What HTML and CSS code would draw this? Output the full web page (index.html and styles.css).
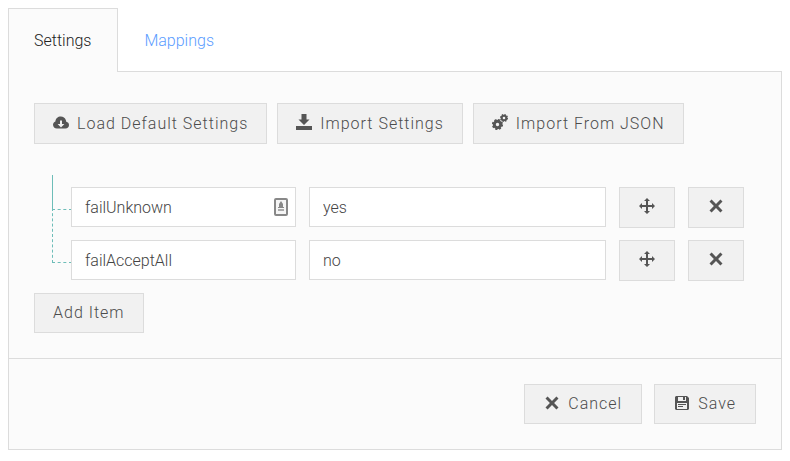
FILE: index.html
```html
<!DOCTYPE html>
<html lang="en">
<head>
    <meta charset="UTF-8">
    <meta name="viewport" content="width=device-width, initial-scale=1.0">
    <title>Settings</title>
    <link rel="stylesheet" href="styles.css">
</head>
<body>

    <!-- Icons shared by the buttons -->
    <svg class="sprite" aria-hidden="true">
        <symbol id="icon-cloud" viewBox="0 0 16 16">
            <path fill-rule="evenodd" d="M4 14.500a4 4 0 0 1-4-3.700c0-1.600 1-2.900 2.400-3.400C2.500 4.600 4.900 2.500 7.800 2.500c2.400 0 4.300 1.300 5 3.400.5 1 .3 1.400.5 1.800 1.600.4 2.700 1.500 2.700 3.200 0 2-1.500 3.600-3.500 3.600zM7 6.500v3.500H4.600L8 13.500l3.400-3.500H9V6.500z"/>
        </symbol>
        <symbol id="icon-download" viewBox="0 0 16 16">
            <path d="M5.500 0h5v5.500h3L8 11 2.500 5.500h3zM0 12h16v4H0z"/>
        </symbol>
        <symbol id="icon-cogs" viewBox="0 0 16 16">
            <circle cx="5.500" cy="10.500" r="3.200" fill="none" stroke="currentColor" stroke-width="3"/>
            <circle cx="5.500" cy="10.500" r="4.800" fill="none" stroke="currentColor" stroke-width="1.600" stroke-dasharray="2.100 1.670"/>
            <circle cx="12" cy="4" r="2.300" fill="none" stroke="currentColor" stroke-width="2"/>
            <circle cx="12" cy="4" r="3.300" fill="none" stroke="currentColor" stroke-width="1.400" stroke-dasharray="1.400 1.190"/>
        </symbol>
        <symbol id="icon-move" viewBox="0 0 16 16">
            <path d="M8 0l3 3H9v4h4V5l3 3-3 3V9H9v4h2l-3 3-3-3h2V9H3v2L0 8l3-3v2h4V3H5z"/>
        </symbol>
        <symbol id="icon-close" viewBox="0 0 16 16">
            <path d="M3.600 1.500L8 5.900l4.400-4.400 2.100 2.100L10.100 8l4.400 4.400-2.100 2.100L8 10.100l-4.400 4.400-2.100-2.100L5.900 8 1.500 3.600z"/>
        </symbol>
        <symbol id="icon-save" viewBox="0 0 16 16">
            <path fill-rule="evenodd" d="M2 1h11l2 2v11l-1 1H2l-1-1V2zM4 2v4h8V2zM3 8v6h10V8z"/>
            <path d="M9 2h2v3H9zM4 9h8v1H4zM4 11h5v1H4z"/>
        </symbol>
    </svg>

    <nav class="tabs">
        <a class="tab active" href="#settings">Settings</a>
        <a class="tab" href="#mappings">Mappings</a>
    </nav>

    <form class="panel" id="settings">
        <div class="panel-body">
            <div class="toolbar">
                <button class="btn" type="button"><svg class="icon"><use href="#icon-cloud"/></svg>Load Default Settings</button>
                <button class="btn" type="button"><svg class="icon"><use href="#icon-download"/></svg>Import Settings</button>
                <button class="btn" type="button"><svg class="icon"><use href="#icon-cogs"/></svg>Import From JSON</button>
            </div>

            <ul class="tree">
                <li class="tree-item">
                    <div class="key">
                        <input class="field" type="text" value="failUnknown" aria-label="Key">
                        <svg class="autofill" viewBox="0 0 16 20" aria-hidden="true">
                            <rect class="autofill-frame" x="2" y="2" width="12" height="16" rx="1"/>
                            <path d="M8 4l2 3v3h1v1H5v-1h1V7z"/>
                            <path class="autofill-base" d="M5 12h6v2H5z"/>
                        </svg>
                    </div>
                    <input class="field" type="text" value="yes" aria-label="Value">
                    <button class="btn btn-icon" type="button" aria-label="Move"><svg class="icon"><use href="#icon-move"/></svg></button>
                    <button class="btn btn-icon" type="button" aria-label="Remove"><svg class="icon"><use href="#icon-close"/></svg></button>
                </li>
                <li class="tree-item">
                    <div class="key">
                        <input class="field" type="text" value="failAcceptAll" aria-label="Key">
                    </div>
                    <input class="field" type="text" value="no" aria-label="Value">
                    <button class="btn btn-icon" type="button" aria-label="Move"><svg class="icon"><use href="#icon-move"/></svg></button>
                    <button class="btn btn-icon" type="button" aria-label="Remove"><svg class="icon"><use href="#icon-close"/></svg></button>
                </li>
            </ul>

            <button class="btn btn-short" type="button">Add Item</button>
        </div>

        <div class="panel-footer">
            <button class="btn btn-short" type="button"><svg class="icon"><use href="#icon-close"/></svg>Cancel</button>
            <button class="btn btn-short" type="submit"><svg class="icon"><use href="#icon-save"/></svg>Save</button>
        </div>
    </form>

</body>
</html>
```

FILE: styles.css
```css
* {
    box-sizing: border-box;
}

body {
    margin: 8px;
    background-color: #fff;
    color: #444;
    font-family: Roboto, "Liberation Sans", sans-serif;
    font-size: 16px;
    font-weight: 300;
    line-height: 24px;
}

.sprite {
    display: none;
}

/* Tabs */
.tabs {
    display: flex;
}

.tab {
    padding: 20px 26px 18px 25px;
    border: 1px solid transparent;
    border-bottom: 0;
    color: #5c9dff;
    text-decoration: none;
}

.tab.active {
    position: relative;
    z-index: 1;
    margin-bottom: -1px;
    padding-bottom: 19px;
    border-color: #dcdcdc;
    background-color: #fbfbfb;
    color: #222;
}

/* Panel */
.panel {
    border: 1px solid #dcdcdc;
    background-color: #fbfbfb;
}

.panel-body {
    padding: 31px 25px 25px;
}

.panel-footer {
    display: flex;
    justify-content: flex-end;
    gap: 12px;
    padding: 25px;
    border-top: 1px solid #dcdcdc;
}

.panel-footer .btn {
    padding: 0 19px;
}

.toolbar {
    display: flex;
    flex-wrap: wrap;
    gap: 10px;
}

/* Buttons */
.btn {
    display: inline-flex;
    align-items: center;
    gap: 8px;
    height: 41px;
    padding: 0 18px;
    border: 1px solid #dcdcdc;
    background-color: #f1f1f1;
    color: #4c4c4c;
    font: inherit;
    letter-spacing: 1px;
    cursor: pointer;
}

.btn:hover {
    background-color: #e8e8e8;
}

.btn-short {
    height: 40px;
}

.btn-icon {
    justify-content: center;
    padding: 0;
}

.icon {
    width: 16px;
    height: 16px;
    margin-bottom: 3px;
    fill: currentColor;
    color: #555;
}

/* Tree of settings */
.tree {
    margin: 31px 12px 12px 0;
    padding: 12px 0 0 37px;
    list-style: none;
}

.tree-item {
    position: relative;
    display: grid;
    grid-template-columns: 225fr 297fr 56px 56px;
    align-items: start;
    gap: 13px;
}

.tree-item + .tree-item {
    margin-top: 12px;
}

.tree-item::before {
    content: "";
    position: absolute;
    top: -32px;
    left: -19px;
    width: 19px;
    height: 54px;
    border-left: 1px dashed #6dbdb8;
    border-bottom: 1px dashed #6dbdb8;
}

.tree-item:first-child::before {
    top: -12px;
    height: 34px;
    border-left-style: solid;
}

.key {
    position: relative;
}

.field {
    display: block;
    width: 100%;
    height: 40px;
    padding: 0 13px;
    border: 1px solid #dcdcdc;
    border-radius: 0;
    background-color: #fff;
    color: #444;
    font: inherit;
}

.autofill {
    position: absolute;
    top: 10px;
    right: 7px;
    width: 16px;
    height: 20px;
    fill: #888;
}

.autofill-frame {
    fill: #f5f5f5;
    stroke: #888;
    stroke-width: 2;
}

.autofill-base {
    fill: #aaa;
}
```
